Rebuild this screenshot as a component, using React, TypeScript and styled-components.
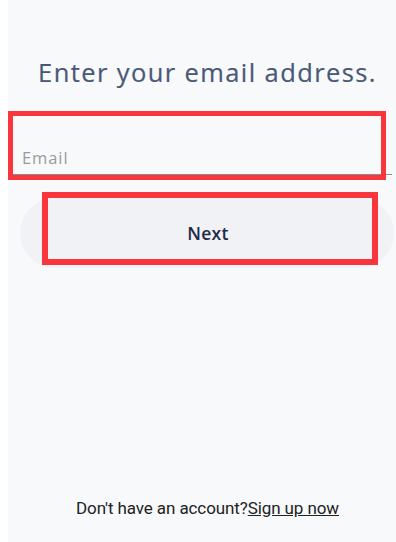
import React, { useState } from 'react';
import styled, { createGlobalStyle } from 'styled-components';

const GlobalStyle = createGlobalStyle`
  html, body {
    margin: 0;
    padding: 0;
    background: #ffffff;
  }
  * {
    box-sizing: border-box;
  }
`;

const Page = styled.div`
  display: flex;
  flex-direction: column;
  min-height: 542px;
  margin-left: 8px;
  background-color: #f8f9fb;
  font-family: 'Open Sans', 'Liberation Sans', sans-serif;
`;

const Title = styled.h1`
  margin: 55px 0 0;
  padding-left: 11px;
  text-align: center;
  font-size: 25.5px;
  font-weight: 400;
  line-height: 34px;
  letter-spacing: 1.4px;
  white-space: nowrap;
  color: #4a5877;
  -webkit-text-stroke: 0.2px #4a5877;
`;

const Field = styled.div`
  position: relative;
  margin: 26px 0 0 4px;
  width: 380px;
`;

const EmailInput = styled.input`
  display: block;
  width: 100%;
  height: 60px;
  padding: 30px 10px 4px 10px;
  border: none;
  border-bottom: 1px solid #8a8d94;
  background: transparent;
  font-family: 'Open Sans', 'Liberation Sans', sans-serif;
  font-size: 16.5px;
  letter-spacing: 0.9px;
  color: #333;
  outline: none;

  &::placeholder {
    color: #9a9a9a;
  }
`;

// red annotation frame drawn over a control
const Highlight = styled.div<{ $top: number; $left: number; $width: number; $height: number; $thick: number }>`
  position: absolute;
  top: ${(p) => p.$top}px;
  left: ${(p) => p.$left}px;
  width: ${(p) => p.$width}px;
  height: ${(p) => p.$height}px;
  border: ${(p) => p.$thick}px solid #f8363b;
  pointer-events: none;
`;

const ButtonRow = styled.div`
  position: relative;
  margin: 23px 0 0 12px;
  width: 374px;
`;

const NextButton = styled.button`
  display: flex;
  align-items: center;
  justify-content: center;
  width: 100%;
  height: 70px;
  border: none;
  border-radius: 35px;
  background-color: #f1f2f6;
  font-family: 'Open Sans', 'Liberation Sans', sans-serif;
  font-size: 17.5px;
  font-weight: 600;
  letter-spacing: 0.3px;
  color: #1f2b48;
  padding: 0 0 0 2px;
  cursor: pointer;
`;

const Footer = styled.div`
  margin-top: auto;
  padding: 0 0 24px 11px;
  text-align: center;
  font-family: Roboto, 'Liberation Sans', sans-serif;
  font-size: 17px;
  letter-spacing: -0.1px;
  color: #222;
`;

const SignUpLink = styled.a`
  color: #222;
  text-decoration: underline;
  cursor: pointer;
`;

const App: React.FC = () => {
  const [email, setEmail] = useState('');

  return (
    <>
      <GlobalStyle />
      <Page>
        <Title>Enter your email address.</Title>

        <Field>
          <EmailInput
            type="email"
            placeholder="Email"
            value={email}
            onChange={(e) => setEmail(e.target.value)}
          />
          <Highlight $top={-4} $left={-4} $width={378} $height={69} $thick={5} />
        </Field>

        <ButtonRow>
          <NextButton>Next</NextButton>
          <Highlight $top={-6} $left={22} $width={336} $height={73} $thick={6} />
        </ButtonRow>

        <Footer>
          Don&apos;t have an account?<SignUpLink>Sign up now</SignUpLink>
        </Footer>
      </Page>
    </>
  );
};

export default App;
